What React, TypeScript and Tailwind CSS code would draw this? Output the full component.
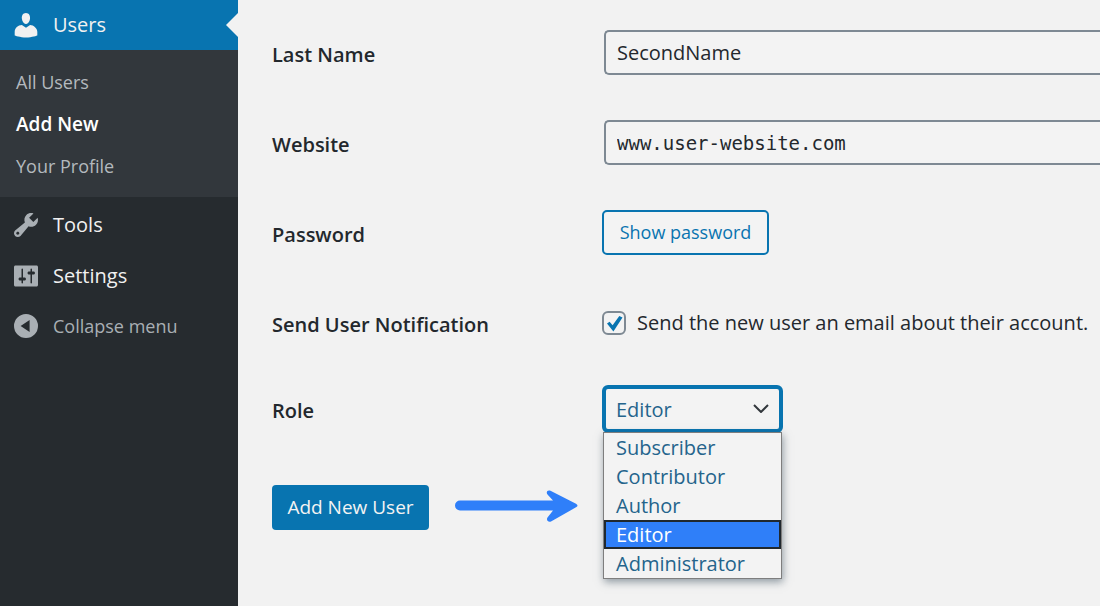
import { useState, type ReactNode } from "react";

const roles = ["Subscriber", "Contributor", "Author", "Editor", "Administrator"];

function Icon({ children }: { children: ReactNode }) {
  return (
    <svg viewBox="0 0 20 20" className="size-[30px] shrink-0 fill-current" aria-hidden="true">
      {children}
    </svg>
  );
}

function UsersIcon() {
  return (
    <Icon>
      <path d="M10 9.25c-2.27 0-2.73-3.44-2.73-3.44C7 4.02 7.82 2 9.97 2c2.16 0 2.98 2.02 2.71 3.81 0 0-.41 3.44-2.68 3.44zm0 2.57L12.72 10c2.39 0 4.82 2.33 4.82 4.53v2.49s-3.65 1.33-7.54 1.33c-3.89 0-7.54-1.33-7.54-1.33v-2.49c0-2.25 2.24-4.48 4.77-4.48z" />
    </Icon>
  );
}

function ToolsIcon() {
  return (
    <Icon>
      <path d="M16.68 9.77c-1.34 1.34-3.3 1.67-4.95.99l-5.41 6.52c-.99.99-2.59.99-3.58 0s-.99-2.59 0-3.57l6.52-5.42c-.68-1.65-.35-3.61.99-4.95 1.28-1.28 3.12-1.62 4.72-1.06l-2.89 2.89 2.82 2.82 2.86-2.87c.53 1.58.18 3.39-1.08 4.65zM3.81 16.21c.4.39 1.04.39 1.43 0 .4-.4.4-1.04 0-1.43-.39-.4-1.03-.4-1.43 0-.39.39-.39 1.03 0 1.43z" />
    </Icon>
  );
}

function SettingsIcon() {
  return (
    <Icon>
      <path d="M18 16V4c0-.55-.45-1-1-1H3c-.55 0-1 .45-1 1v12c0 .55.45 1 1 1h14c.55 0 1-.45 1-1zM8 11h1c.55 0 1 .45 1 1s-.45 1-1 1H8v1.5c0 .28-.22.5-.5.5s-.5-.22-.5-.5V13H6c-.55 0-1-.45-1-1s.45-1 1-1h1V5.500c0-.28.22-.5.5-.5s.5.22.5.5V11zm5-2h-1c-.55 0-1-.45-1-1s.45-1 1-1h1V5.500c0-.28.22-.5.5-.5s.5.22.5.5V7h1c.55 0 1 .45 1 1s-.45 1-1 1h-1v5.500c0 .28-.22.5-.5.5s-.5-.22-.5-.5V9z" />
    </Icon>
  );
}

function CollapseIcon() {
  return (
    <Icon>
      <path fillRule="evenodd" d="M10 2a8 8 0 1 1 0 16 8 8 0 0 1 0-16zm2.4 4L6.4 10l6 4z" />
    </Icon>
  );
}

function Sidebar() {
  return (
    <nav className="flex w-[238px] shrink-0 flex-col bg-[#262b2f] text-[20px] leading-[30px] text-[#f1f1f1]">
      <a href="#users" className="relative flex h-[50px] items-center gap-3 bg-[#0874b0] pl-[11px]">
        <UsersIcon />
        Users
        <svg viewBox="0 0 12 24" className="absolute top-[13px] right-0 h-6 w-3 fill-[#f2f2f2]" aria-hidden="true">
          <path d="M12 0v24L0 12z" />
        </svg>
      </a>
      <div className="flex flex-col bg-[#32373c] pt-[11px] pb-[10px] pl-4 text-[18px] leading-[42px] text-[#b4b9be]">
        <a href="#all">All Users</a>
        <a href="#new" className="text-[19px] font-semibold text-white">Add New</a>
        <a href="#profile">Your Profile</a>
      </div>
      <a href="#tools" className="mt-0.5 flex h-[51px] items-center gap-3 pl-[11px]">
        <span className="text-[#a9afb4]"><ToolsIcon /></span>
        Tools
      </a>
      <a href="#settings" className="flex h-[51px] items-center gap-3 pl-[11px]">
        <span className="text-[#a9afb4]"><SettingsIcon /></span>
        Settings
      </a>
      <button type="button" className="flex h-[50px] items-center gap-3 pl-[11px] text-[18px] text-[#a9afb4]">
        <CollapseIcon />
        Collapse menu
      </button>
    </nav>
  );
}

function Row({ label, htmlFor, children }: { label: string; htmlFor: string; children: ReactNode }) {
  return (
    <div className="flex h-[45px] items-center">
      <label htmlFor={htmlFor} className="w-[332px] shrink-0 pt-1 font-semibold">{label}</label>
      {children}
    </div>
  );
}

const fieldClass =
  "h-full min-w-0 flex-1 rounded-l-[5px] border-2 border-r-0 border-[#7e8993] bg-[#f3f3f3] px-[11px] outline-none";

export default function App() {
  const [role, setRole] = useState("Editor");
  const [notify, setNotify] = useState(true);

  return (
    <div className="flex min-h-screen bg-[#f2f2f2] font-['Open_Sans','Noto_Sans',sans-serif] text-[20px] leading-[29px] text-[#23282d]">
      <Sidebar />
      <form className="flex min-w-0 flex-1 flex-col gap-[45px] pt-[30px] pl-[34px]" onSubmit={(e) => e.preventDefault()}>
        <Row label="Last Name" htmlFor="last">
          <input id="last" type="text" defaultValue="SecondName" className={fieldClass} />
        </Row>
        <Row label="Website" htmlFor="site">
          <input id="site" type="text" defaultValue="www.user-website.com" className={`${fieldClass} font-['DejaVu_Sans_Mono',monospace] text-[19px]`} />
        </Row>
        <Row label="Password" htmlFor="pass">
          <button id="pass" type="button" className="-ml-0.5 h-full w-[167px] rounded-[5px] border-2 border-[#0874b0] bg-[#f3f3f3] text-[18px] text-[#0874b0]">
            Show password
          </button>
        </Row>
        <Row label="Send User Notification" htmlFor="notify">
          <span className="relative -ml-0.5 grid shrink-0 place-items-center">
            <input id="notify" type="checkbox" checked={notify} onChange={(e) => setNotify(e.target.checked)} className="size-6 appearance-none rounded-[6px] border-2 border-[#7e8993] bg-[#f3f3f3]" />
            {notify && (
              <svg viewBox="0 0 24 24" className="pointer-events-none absolute size-6 fill-[#0874b0]" aria-hidden="true">
                <path d="M5 12.4l2.6-1.7 3 3.6L17.3 5l3.2 1.4-9.1 14z" />
              </svg>
            )}
          </span>
          <label htmlFor="notify" className="pl-[11px] whitespace-nowrap">Send the new user an email about their account.</label>
        </Row>
        <div className="-mt-1">
          <Row label="Role" htmlFor="role">
            <div className="relative -ml-0.5 w-[181px]">
              <select id="role" value={role} onChange={(e) => setRole(e.target.value)} className="block h-[48px] w-full appearance-none rounded-[6px] border-4 border-[#0874b0] bg-[#f3f3f3] px-[10px] pt-0.5 text-[#24648c] outline-none">
                {roles.map((r) => <option key={r}>{r}</option>)}
              </select>
              <svg viewBox="0 0 16 9" className="pointer-events-none absolute top-[19px] right-[14px] h-[9px] w-4 fill-none stroke-[#32373c] stroke-2" aria-hidden="true">
                <path d="M1 1l7 7 7-7" />
              </svg>
              <ul role="listbox" aria-label="Role" className="absolute inset-x-px top-[47px] border border-[#7e7e7e] bg-[#f3f3f3] text-[#24648c] shadow-[1px_3px_8px_rgba(60,80,95,0.55)]">
                {roles.map((r) => (
                  <li key={r} role="option" aria-selected={r === role} onClick={() => setRole(r)} className="h-[29px] cursor-default border-2 border-transparent pl-[10px] leading-[26px] aria-selected:border-[#20282e] aria-selected:bg-[#2f7ff9] aria-selected:text-white">
                    {r}
                  </li>
                ))}
              </ul>
            </div>
          </Row>
        </div>
        <div className="mt-[9px] flex items-center gap-[26px]">
          <button type="submit" className="h-[45px] w-[157px] rounded-[4px] bg-[#0874b0] text-[19px] text-[#f3f3f3]">Add New User</button>
          <svg viewBox="0 0 123 36" className="h-9 w-[123px] fill-[#2f7ff9]" aria-hidden="true">
            <path d="M5 10.500h93l-5.500-6C90.500 1.500 93-.5 95.500.8L121 13.700q3 1.800 0 3.600L96 31.500c-3 1-5-1.500-3.500-4l5.500-7H5a5 5 0 0 1 0-10z" />
          </svg>
        </div>
      </form>
    </div>
  );
}
